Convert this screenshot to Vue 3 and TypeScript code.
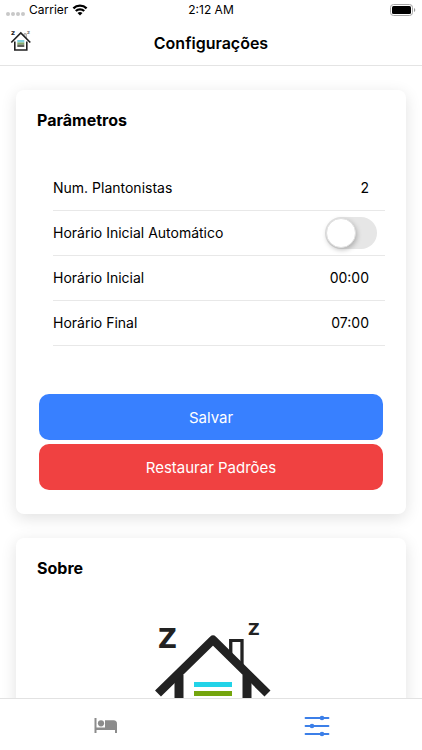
<script setup lang="ts">
import { ref } from 'vue'

const planton = ref('2')
const autoStart = ref(false)
const startTime = ref('00:00')
const endTime = ref('07:00')

function restore(): void {
  planton.value = '2'
  autoStart.value = false
  startTime.value = '00:00'
  endTime.value = '07:00'
}
</script>

<template>
  <div class="screen">
    <header class="top">
      <div class="status">
        <div class="carrier">
          <span class="dots"><i></i><i></i><i></i><i></i></span>
          <span>Carrier</span>
          <svg class="wifi" viewBox="0 0 16 12" aria-hidden="true">
            <path d="M1.4 4.4a9.4 9.4 0 0 1 13.2 0" />
            <path d="M3.8 7a6 6 0 0 1 8.4 0" />
            <path class="solid" d="M8 11.6 5.5 9.1a3.6 3.6 0 0 1 5 0z" />
          </svg>
        </div>
        <span class="clock">2:12 AM</span>
        <svg class="battery" viewBox="0 0 26 12" aria-hidden="true">
          <rect x="0.5" y="0.5" width="22" height="11" rx="3" fill="#fff" stroke="#a5a5a5" />
          <rect x="2" y="2" width="19" height="8" rx="1.5" fill="#000" />
          <path d="M24 4a2.2 2.2 0 0 1 0 4z" fill="#999" />
        </svg>
      </div>
      <div class="nav">
        <svg class="mini" viewBox="0 0 22 22" aria-hidden="true">
          <text class="z" x="1" y="5" font-size="7">z</text>
          <text class="z faint" x="17" y="4" font-size="5">z</text>
          <path d="M14 6V3.800h2.200V8" fill="none" stroke="#777" stroke-width="0.800" />
          <path d="M4.800 11.500V20h12v-8.500" fill="none" stroke="#222" stroke-width="1.600" />
          <path d="M1.300 12.500 10.800 3l9.500 9.500" fill="none" stroke="#222" stroke-width="1.700" />
          <rect x="7.300" y="10" width="7" height="2.500" fill="#7fd0dc" />
          <rect x="7.300" y="12.500" width="7" height="2" fill="#86ab68" />
          <rect x="7.300" y="14.500" width="7" height="2.500" fill="#5c6259" />
        </svg>
        <h1>Configurações</h1>
      </div>
    </header>

    <main class="content">
      <section class="card">
        <h2>Parâmetros</h2>
        <form class="form" @submit.prevent>
          <div class="list">
            <div class="row">
              <label for="planton">Num. Plantonistas</label>
              <input id="planton" v-model="planton" class="value" type="text" inputmode="numeric" />
            </div>
            <div class="row">
              <label for="auto">Horário Inicial Automático</label>
              <input id="auto" v-model="autoStart" class="toggle" type="checkbox" role="switch" />
            </div>
            <div class="row">
              <label for="start">Horário Inicial</label>
              <input id="start" v-model="startTime" class="value" type="text" />
            </div>
            <div class="row">
              <label for="end">Horário Final</label>
              <input id="end" v-model="endTime" class="value" type="text" />
            </div>
          </div>
          <div class="actions">
            <button class="save" type="submit">Salvar</button>
            <button class="reset" type="button" @click="restore">Restaurar Padrões</button>
          </div>
        </form>
      </section>

      <section class="card">
        <h2>Sobre</h2>
        <svg class="logo" viewBox="0 0 120 120" aria-hidden="true">
          <text class="z" x="7" y="28" font-size="26">Z</text>
          <text class="z" x="97" y="15" font-size="16">Z</text>
          <path d="M79.500 36V20.500H91V46" fill="none" stroke="#222" stroke-width="2.800" />
          <path d="M22 62 62 22l40 40v10H22z" fill="#fff" />
          <path d="M80 36V20.500H91V46" fill="none" stroke="#222" stroke-width="2.800" />
          <path d="M28 55v59h68V55" fill="none" stroke="#222" stroke-width="9" />
          <path d="M7 73.500 62 19.700l54.500 53.800" fill="none" stroke="#222" stroke-width="8.500" stroke-linejoin="round" />
          <rect x="43" y="62" width="38" height="5" fill="#22d3e8" />
          <rect x="43" y="71" width="38" height="5" fill="#74a50d" />
        </svg>
      </section>
    </main>

    <nav class="tabs">
      <a href="#plantao" aria-label="Plantão">
        <svg class="bed" viewBox="0 0 24 18" aria-hidden="true">
          <path d="M0.500 1h2v9.500H23V16h-2v-3H2.500v3h-2z" />
          <circle cx="7" cy="6.300" r="3.100" />
          <path d="M11 3.300h8.500A3.500 3.500 0 0 1 23 6.800V11H11z" />
        </svg>
      </a>
      <a href="#configuracoes" aria-label="Configurações">
        <svg class="sliders" viewBox="0 0 26 22" aria-hidden="true">
          <path d="M1.500 3h23M1.500 11h23M1.500 19h23" stroke="currentColor" stroke-width="1.800" stroke-linecap="round" />
          <circle cx="18" cy="3" r="2.300" />
          <circle cx="8" cy="11" r="2.300" />
          <circle cx="18" cy="19" r="2.300" />
        </svg>
      </a>
    </nav>
  </div>
</template>

<style>
body {
  background: #fff;
}
</style>

<style scoped>
.screen {
  display: flex;
  flex-direction: column;
  height: 100vh;
  overflow: hidden;
  box-sizing: border-box;
  color: #000;
  background: #fff;
  font-family: Inter, "Liberation Sans", sans-serif;
}
.top {
  border-bottom: 1px solid #e4e4e4;
}
.status {
  display: grid;
  grid-template-columns: 1fr auto 1fr;
  align-items: center;
  height: 20px;
  padding: 0 6px;
  font-size: 12px;
  line-height: 16px;
}
.carrier {
  display: flex;
  align-items: center;
  gap: 4px;
}
.dots {
  display: flex;
  gap: 1px;
  padding-top: 8px;
}
.dots i {
  width: 4px;
  height: 4px;
  border-radius: 50%;
  background: #c8c8c8;
}
.wifi {
  width: 16px;
  height: 12px;
  fill: none;
  stroke: #000;
  stroke-width: 2.3;
}
.wifi .solid {
  fill: #000;
  stroke: none;
}
.battery {
  justify-self: end;
  width: 26px;
  height: 12px;
}
.nav {
  display: grid;
  grid-template-columns: 1fr auto 1fr;
  align-items: center;
  height: 45px;
  padding: 0 10px;
}
.mini {
  width: 22px;
  height: 22px;
  margin-bottom: 4px;
}
.z {
  font-family: "DejaVu Sans", sans-serif;
  font-weight: 700;
  fill: #222;
}
.z.faint {
  fill: #777;
}
h1 {
  margin: 0;
  font-size: 16px;
  font-weight: 600;
  line-height: 24px;
}
.content {
  display: flex;
  flex: 1;
  flex-direction: column;
  gap: 24px;
  min-height: 0;
  padding: 24px 16px 0;
  overflow: hidden;
}
.card {
  flex: none;
  padding: 18px 21px 24px;
  border-radius: 8px;
  background: #fff;
  box-shadow: 0 4px 16px rgba(0, 0, 0, 0.12);
}
h2 {
  margin: 0;
  font-size: 16px;
  font-weight: 700;
  line-height: 24px;
}
.list {
  margin: 34px 0 0 16px;
}
.row {
  display: flex;
  align-items: center;
  justify-content: space-between;
  height: 44px;
  padding-right: 8px;
  border-bottom: 1px solid #e8e8e8;
  font-size: 14px;
}
.row label {
  padding-bottom: 2px;
}
.value {
  width: 80px;
  padding: 0 8px 2px;
  border: 0;
  color: inherit;
  background: transparent;
  font: inherit;
  text-align: right;
}
.toggle {
  width: 52px;
  height: 32px;
  margin: 0;
  padding: 1px;
  box-sizing: border-box;
  appearance: none;
  border-radius: 16px;
  background: #e6e6e6;
}
.toggle::before {
  content: "";
  display: block;
  width: 30px;
  height: 30px;
  box-sizing: border-box;
  border: 1px solid #e0e0e0;
  border-radius: 50%;
  background: #fff;
  box-shadow: 1px 2px 5px rgba(0, 0, 0, 0.25);
}
.toggle:checked {
  background: #3880ff;
}
.toggle:checked::before {
  margin-left: 20px;
}
.actions {
  display: flex;
  flex-direction: column;
  gap: 4px;
  margin: 48px 2px 0;
}
.actions button {
  height: 46px;
  padding: 0;
  border: 0;
  border-radius: 10px;
  color: #fff;
  font-family: inherit;
  font-size: 15px;
}
.actions .save {
  background: #3880ff;
}
.actions .reset {
  background: #f04141;
}
.logo {
  display: block;
  width: 120px;
  height: 120px;
  margin: 40px auto 0;
}
.tabs {
  display: grid;
  grid-template-columns: 1fr 1fr;
  height: 51px;
  border-top: 1px solid #e2e2e2;
  background: #fff;
}
.tabs a {
  display: flex;
  align-items: center;
  justify-content: center;
  padding-top: 3px;
  color: #8c8c8c;
}
.tabs a:last-child {
  color: #3c7fe8;
}
.tabs svg {
  fill: currentColor;
}
.bed {
  width: 24px;
  height: 18px;
}
.sliders {
  width: 26px;
  height: 22px;
}
</style>
